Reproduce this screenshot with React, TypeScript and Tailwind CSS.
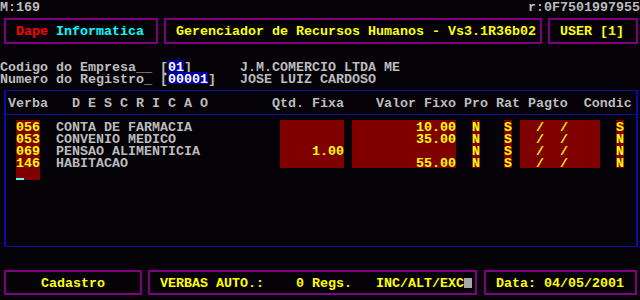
const rows = [
  { verba: "056", desc: "CONTA DE FARMACIA", qtd: "", valor: "10.00", pro: "N", rat: "S", cond: "S" },
  { verba: "053", desc: "CONVENIO MEDICO", qtd: "", valor: "35.00", pro: "N", rat: "S", cond: "N" },
  { verba: "069", desc: "PENSAO ALIMENTICIA", qtd: "1.00", valor: "", pro: "N", rat: "S", cond: "N" },
  { verba: "146", desc: "HABITACAO", qtd: "", valor: "55.00", pro: "N", rat: "S", cond: "N" },
];

function Line({ children }: { children?: React.ReactNode }) {
  return <div className="h-[12px] whitespace-pre">{children}</div>;
}

export default function App() {
  return (
    <div className="w-[640px] h-[300px] overflow-hidden bg-[#050308] font-['Liberation_Mono','DejaVu_Sans_Mono',monospace] text-[13.333px] leading-[15px] font-bold text-[#bcbcbc]">
      {/* status line */}
      <div className="flex h-[12px] justify-between">
        <span>M:169</span>
        <span>r:0F7501997955</span>
      </div>

      {/* header boxes */}
      <div className="mt-[6px] flex h-[26px]">
        <div className="ml-[4px] w-[154px] border-2 border-[#800080] pl-[10px] pt-[4px] whitespace-pre">
          <span className="text-[#ff0000]">Dape</span> <span className="text-[#00ffff]">Informatica</span>
        </div>
        <div className="ml-[6px] w-[378px] border-2 border-[#800080] pl-[10px] pt-[4px] whitespace-pre text-[#ffff00]">
          Gerenciador de Recursos Humanos - Vs3.1R36b02
        </div>
        <div className="ml-[6px] w-[90px] border-2 border-[#800080] pl-[10px] pt-[4px] whitespace-pre text-[#ffff00]">
          USER [1]
        </div>
      </div>

      {/* empresa / registro */}
      <div className="mt-[16px]">
        <Line>
          {"Codigo do Empresa__ ["}
          <span className="inline-block h-[12px] bg-[#0000a8] text-white">01</span>
          {"]      J.M.COMERCIO LTDA ME"}
        </Line>
        <Line>
          {"Numero do Registro_ ["}
          <span className="inline-block h-[12px] bg-[#0000a8] text-white">00001</span>
          {"]   JOSE LUIZ CARDOSO"}
        </Line>
      </div>

      {/* table */}
      <div className="mt-[6px] ml-[4px] h-[157px] w-[634px] border-x-2 border-y border-[#0a0aa8]">
        <div className="h-[24px] border-b border-[#0a0aa8] pl-[2px] pt-[5px] whitespace-pre">
          {"Verba   D E S C R I C A O        Qtd. Fixa    Valor Fixo Pro Rat Pagto  Condic"}
        </div>

        <div className="mt-[5px] flex items-start">
          <div className="ml-[10px] w-[24px] bg-[#800000] text-[#ffff00]">
            {rows.map((r) => (
              <Line key={r.verba}>{r.verba}</Line>
            ))}
            <div className="flex h-[12px] items-end">
              <div className="h-[2px] w-[8px] bg-[#55ffff]" />
            </div>
          </div>

          <div className="ml-[16px] w-[224px]">
            {rows.map((r) => (
              <Line key={r.verba}>{r.desc}</Line>
            ))}
          </div>

          <div className="w-[64px] bg-[#800000] text-right text-[#ffff00]">
            {rows.map((r) => (
              <Line key={r.verba}>{r.qtd}</Line>
            ))}
          </div>

          <div className="ml-[8px] w-[104px] bg-[#800000] text-right text-[#ffff00]">
            {rows.map((r) => (
              <Line key={r.verba}>{r.valor}</Line>
            ))}
          </div>

          <div className="ml-[16px] w-[8px] bg-[#800000] text-[#ffff00]">
            {rows.map((r) => (
              <Line key={r.verba}>{r.pro}</Line>
            ))}
          </div>

          <div className="ml-[24px] w-[8px] bg-[#800000] text-[#ffff00]">
            {rows.map((r) => (
              <Line key={r.verba}>{r.rat}</Line>
            ))}
          </div>

          <div className="ml-[8px] w-[80px] bg-[#800000] text-[#ffff00]">
            {rows.map((r) => (
              <Line key={r.verba}>{"  /  /"}</Line>
            ))}
          </div>

          <div className="ml-[16px] w-[8px] bg-[#800000] text-[#ffff00]">
            {rows.map((r) => (
              <Line key={r.verba}>{r.cond}</Line>
            ))}
          </div>
        </div>
      </div>

      {/* footer boxes */}
      <div className="mt-[23px] flex h-[25px] text-[#ffff00]">
        <div className="ml-[4px] w-[138px] border-2 border-[#800080] pt-[4px] text-center">
          Cadastro
        </div>
        <div className="ml-[6px] flex w-[329px] border-2 border-[#800080] pl-[10px] pt-[4px] whitespace-pre">
          <span>{"VERBAS AUTO.:    0 Regs.   INC/ALT/EXC"}</span>
          <span className="mt-[2px] h-[10px] w-[8px] bg-[#a8a8a8]" />
        </div>
        <div className="ml-[7px] w-[153px] border-2 border-[#800080] pl-[10px] pt-[4px] whitespace-pre">
          Data: 04/05/2001
        </div>
      </div>
    </div>
  );
}
